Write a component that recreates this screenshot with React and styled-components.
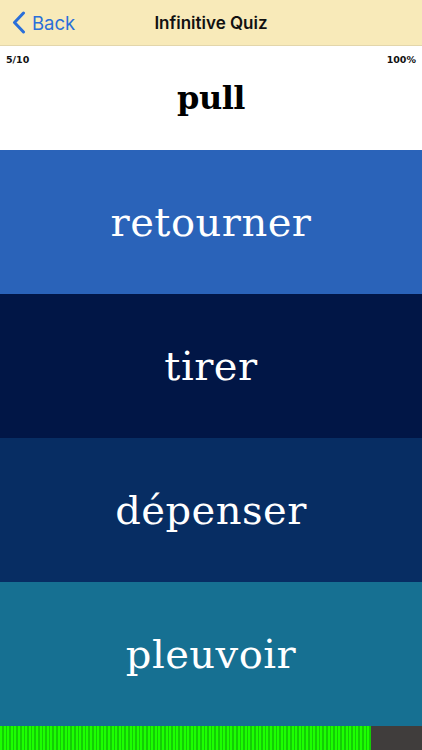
import React from 'react';
import styled, { createGlobalStyle } from 'styled-components';

const GlobalStyle = createGlobalStyle`
  html, body {
    margin: 0;
    padding: 0;
    background: #ffffff;
  }
  * { box-sizing: border-box; }
`;

const choices = [
  { word: 'retourner', color: '#2a63b9' },
  { word: 'tirer', color: '#011646' },
  { word: 'dépenser', color: '#072d63' },
  { word: 'pleuvoir', color: '#167092' },
];

const Screen = styled.div`
  width: 422px;
  height: 750px;
  display: flex;
  flex-direction: column;
  overflow: hidden;
`;

const NavBar = styled.div`
  height: 46px;
  flex: none;
  background: #f8eab9;
  border-bottom: 1px solid #e3d6ab;
  display: grid;
  grid-template-columns: 1fr auto 1fr;
  align-items: center;
  padding: 0 12px;
`;

const BackButton = styled.div`
  display: flex;
  align-items: center;
  gap: 6px;
  color: #2a6fd9;
  font-family: 'Inter', 'Liberation Sans', sans-serif;
  font-size: 18.5px;
`;

const Title = styled.div`
  font-family: 'Inter', 'Liberation Sans', sans-serif;
  font-size: 17px;
  font-weight: 600;
  color: #111;
`;

const Prompt = styled.div`
  height: 104px;
  flex: none;
  background: #fff;
  display: flex;
  flex-direction: column;
  padding: 8px 6px 0;
`;

const Stats = styled.div`
  display: flex;
  justify-content: space-between;
  font-family: 'DejaVu Sans', 'Liberation Sans', sans-serif;
  font-weight: bold;
  font-size: 9.5px;
  color: #111;
`;

const Word = styled.div`
  text-align: center;
  font-family: 'DejaVu Serif', 'Liberation Serif', serif;
  font-weight: bold;
  font-size: 32px;
  color: #000;
  margin-top: 14px;
  letter-spacing: -0.5px;
`;

const Choice = styled.div`
  height: 144px;
  flex: none;
  background: ${(p) => p.$bg};
  display: flex;
  align-items: center;
  justify-content: center;
  color: #fff;
  font-family: 'DejaVu Serif', 'Liberation Serif', serif;
  font-size: 40px;
  letter-spacing: 0.5px;
`;

const ProgressTrack = styled.div`
  flex: 1;
  background: #403d3c;
  display: flex;
`;

const ProgressFill = styled.div`
  height: 100%;
  background: repeating-linear-gradient(
    90deg,
    #1cff00 0px,
    #1cff00 2px,
    #13cc05 2px,
    #13cc05 3.6px
  );
`;

export default function App() {
  const progress = 371 / 422;
  return (
    <>
      <GlobalStyle />
      <Screen>
        <NavBar>
          <BackButton>
            <svg width="14" height="23" viewBox="0 0 14 23">
              <path d="M11.5 2 L2.5 11.5 L11.5 21" fill="none" stroke="#2a6fd9" strokeWidth="3" strokeLinecap="round" strokeLinejoin="round" />
            </svg>
            Back
          </BackButton>
          <Title>Infinitive Quiz</Title>
          <div />
        </NavBar>
        <Prompt>
          <Stats>
            <span>5/10</span>
            <span>100%</span>
          </Stats>
          <Word>pull</Word>
        </Prompt>
        {choices.map((c) => (
          <Choice key={c.word} $bg={c.color}>{c.word}</Choice>
        ))}
        <ProgressTrack>
          <ProgressFill style={{ width: `${progress * 100}%` }} />
        </ProgressTrack>
      </Screen>
    </>
  );
}
